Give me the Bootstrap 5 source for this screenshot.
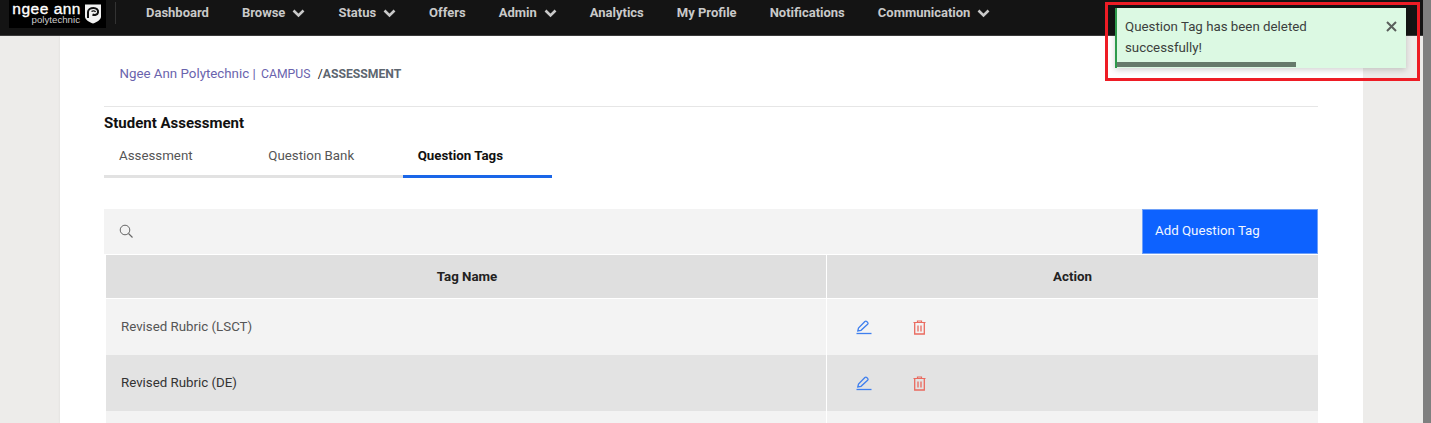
<!DOCTYPE html>
<html lang="en">
<head>
<meta charset="utf-8">
<title>Student Assessment</title>
<link href="https://cdn.jsdelivr.net/npm/bootstrap@5.3.0/dist/css/bootstrap.min.css" rel="stylesheet">
<style>
html,body{height:423px;overflow:hidden}
body{background:#edecea;font-family:Roboto,"Liberation Sans",sans-serif;font-size:13.3px;color:#444;position:relative}
.topbar{height:36px;background:#141414;border-bottom:1px solid #3a3a3a;padding-right:8px}
.brandbox{width:97px;height:28px;background:#000;margin-left:9px;color:#fff;line-height:1;flex:none}
.brandtext{width:72px;text-align:right}
.brandbig{font-size:15.5px;letter-spacing:.5px;-webkit-text-stroke:.35px #fff;line-height:18px;margin-bottom:-3px;font-family:"Liberation Sans",sans-serif;white-space:nowrap}
.brandsmall{font-size:9.700px;color:#ccc;line-height:9px;margin-right:1px;font-family:"Liberation Sans",sans-serif}
.navsep{width:1px;height:22px;background:#333;margin:2px 30px 0 9px}
.navlink{color:#c9c9c9;font-weight:700;font-size:13px;line-height:16px;text-decoration:none;margin-right:33px;white-space:nowrap;display:flex;align-items:center;gap:7px;padding-top:5px}
.shell{width:1363px;height:387px;overflow:hidden}
.panel{margin-left:60px;width:1303px;height:387px;background:#fff;box-shadow:1px 0 3px rgba(0,0,0,.15);padding:0 45px 0 44px}
.crumbs{height:71px;padding:30px 0 0 15.500px;border-bottom:1px solid #e6e6e6;font-size:13.3px;line-height:15px;white-space:nowrap}
.crumbs a{color:#6a63ad;text-decoration:none}
.crumbcampus{font-size:12.200px;margin-left:2px}
.crumbcur{font-size:12.200px;font-weight:700;color:#5d6670;margin-left:4px}
.crumbcur b{color:#222;font-weight:400}
.pagetitle{font-size:15px;font-weight:700;color:#111;margin:8px 0 0;line-height:17px}
.tabrow{width:448px;height:44px;margin-top:2px}
.tabitem{width:149.33px;height:44px;border-bottom:3px solid #e2e2e2;padding:13px 0 0 15px;color:#555;text-decoration:none;line-height:17px;font-size:13.3px}
.tabitem.onn{color:#111;font-weight:700;border-bottom-color:#1a66e8}
.searchrow{height:45px;margin-top:31px;background:#f3f3f3}
.searchico{margin-left:15px}
.addbtn{width:176px;height:45px;background:#0d62ff;border:1px solid #6ea0f8;border-radius:0;color:#f2f6ff;font-size:13.3px;text-align:left;padding:0 0 2px 12px;font-family:inherit}
.addbtn:hover{background:#0d62ff;color:#fff}
.tagtable{margin:1px 0 0 2px;width:1212px;border-collapse:separate;border-spacing:0;table-layout:fixed}
.tagtable th{background:#dfdfdf;height:44px;text-align:center;font-weight:700;color:#222;font-size:13.3px;vertical-align:middle;padding:0;border-bottom:1px solid #fff}
.tagtable th:first-child{padding-left:2px}
.tagtable td{height:56px;padding:0 0 0 15px;vertical-align:middle;font-size:13.3px;background:#f3f3f3;color:#555}
.tagtable tr.alt td{background:#e3e3e3;color:#333}
.tagtable .splitcol{border-left:1px solid #fff}
.iconcell{display:flex;align-items:center;gap:41px;padding-left:14px}
.noticebox{position:absolute;left:1115px;top:8px;width:291px;height:60px;background:#dcf9e3;border-left:2px solid #2e9a4c;box-shadow:0 2px 6px rgba(0,0,0,.18);color:#3b3f3d;font-size:13.3px;line-height:20.5px;padding:9px 0 0 8px}
.noticeclose{position:absolute;right:9px;top:13px;background:none;border:0;padding:0;line-height:0}
.noticebar{position:absolute;left:0;bottom:1px;width:179px;height:5px;background:#667a6b}
.redframe{position:absolute;left:1105px;top:2px;width:315px;height:79px;border:3px solid #ee1c25;pointer-events:none}
.sbar{position:absolute;right:0;top:0;width:8px;height:423px;background:#7f7f7f}
</style>
</head>
<body>
<nav class="topbar d-flex align-items-start">
  <div class="brandbox d-flex">
    <div class="brandtext"><div class="brandbig">ngee ann</div><div class="brandsmall">polytechnic</div></div>
    <svg width="16" height="20" viewBox="0 0 16 20" class="ms-1 mt-1"><path d="M0 .5h16v12c0 3.500-4 5.500-8 7C4 18 0 16 0 12.500z" fill="#f2f2f2"/><path d="M3 14V8C3 5.500 5.500 4 8.500 4S13.500 5.800 13 8.500C12.500 11 9.500 11.500 7.500 10.500" fill="none" stroke="#111" stroke-width="2"/><path d="M6.500 7.500C8 6.500 10 6.800 10.500 8" fill="none" stroke="#111" stroke-width="1.400"/></svg>
  </div>
  <div class="navsep"></div>
  <a class="navlink" href="#">Dashboard</a>
  <a class="navlink" href="#">Browse <svg width="13" height="9" viewBox="0 0 13 9"><path d="M1.500 1.500l5 5 5-5" fill="none" stroke="#c9c9c9" stroke-width="2.600"/></svg></a>
  <a class="navlink" href="#">Status <svg width="13" height="9" viewBox="0 0 13 9"><path d="M1.500 1.500l5 5 5-5" fill="none" stroke="#c9c9c9" stroke-width="2.600"/></svg></a>
  <a class="navlink" href="#">Offers</a>
  <a class="navlink" href="#">Admin <svg width="13" height="9" viewBox="0 0 13 9"><path d="M1.500 1.500l5 5 5-5" fill="none" stroke="#c9c9c9" stroke-width="2.600"/></svg></a>
  <a class="navlink" href="#">Analytics</a>
  <a class="navlink" href="#">My Profile</a>
  <a class="navlink" href="#">Notifications</a>
  <a class="navlink" href="#">Communication <svg width="13" height="9" viewBox="0 0 13 9"><path d="M1.500 1.500l5 5 5-5" fill="none" stroke="#c9c9c9" stroke-width="2.600"/></svg></a>
</nav>
<div class="shell">
  <main class="panel">
    <div class="crumbs"><a href="#">Ngee Ann Polytechnic |</a> <a href="#" class="crumbcampus">CAMPUS</a> <span class="crumbcur"><b>/</b>ASSESSMENT</span></div>
    <h1 class="pagetitle">Student Assessment</h1>
    <div class="tabrow d-flex">
      <a class="tabitem" href="#">Assessment</a>
      <a class="tabitem" href="#">Question Bank</a>
      <a class="tabitem onn" href="#">Question Tags</a>
    </div>
    <div class="searchrow d-flex align-items-center justify-content-between">
      <svg class="searchico" width="15" height="15" viewBox="0 0 15 15"><circle cx="6" cy="6" r="4.800" fill="none" stroke="#666" stroke-width="1"/><path d="M9.500 9.500l4 4" stroke="#666" stroke-width="1.100"/></svg>
      <button class="btn addbtn" type="button">Add Question Tag</button>
    </div>
    <table class="tagtable">
      <colgroup><col style="width:720px"><col></colgroup>
      <thead><tr><th>Tag Name</th><th class="splitcol">Action</th></tr></thead>
      <tbody>
        <tr><td>Revised Rubric (LSCT)</td><td class="splitcol"><div class="iconcell">
          <svg width="16" height="15" viewBox="0 0 16 15"><path d="M1.800 11l.7-3 6.400-6.500a1.300 1.300 0 0 1 1.800 0l.9.900a1.300 1.300 0 0 1 0 1.800L5 10.300z" fill="none" stroke="#3f7fee" stroke-width="1.300"/><path d="M0.500 13.500h15" stroke="#3f7fee" stroke-width="1.300"/></svg>
          <svg width="13" height="15" viewBox="0 0 13 15"><path d="M.5 2.500h12M4.500 2.500v-1.500h4v1.500" fill="none" stroke="#ea6a5f" stroke-width="1.200"/><path d="M1.700 3v11h9.600V3" fill="none" stroke="#ea6a5f" stroke-width="1.300"/><path d="M5 5.500v6M8 5.500v6" stroke="#ea6a5f" stroke-width="1.300"/></svg>
        </div></td></tr>
        <tr class="alt"><td>Revised Rubric (DE)</td><td class="splitcol"><div class="iconcell">
          <svg width="16" height="15" viewBox="0 0 16 15"><path d="M1.800 11l.7-3 6.400-6.500a1.300 1.300 0 0 1 1.800 0l.9.900a1.300 1.300 0 0 1 0 1.800L5 10.300z" fill="none" stroke="#3f7fee" stroke-width="1.300"/><path d="M0.500 13.500h15" stroke="#3f7fee" stroke-width="1.300"/></svg>
          <svg width="13" height="15" viewBox="0 0 13 15"><path d="M.5 2.500h12M4.500 2.500v-1.500h4v1.500" fill="none" stroke="#ea6a5f" stroke-width="1.200"/><path d="M1.700 3v11h9.600V3" fill="none" stroke="#ea6a5f" stroke-width="1.300"/><path d="M5 5.500v6M8 5.500v6" stroke="#ea6a5f" stroke-width="1.300"/></svg>
        </div></td></tr>
        <tr><td>&nbsp;</td><td class="splitcol">&nbsp;</td></tr>
      </tbody>
    </table>
  </main>
</div>
<div class="noticebox" role="alert">Question Tag has been deleted<br>successfully!
  <button class="noticeclose" type="button" aria-label="Close"><svg width="11" height="11" viewBox="0 0 11 11"><path d="M1 1l9 9M10 1l-9 9" stroke="#5a5f5c" stroke-width="2"/></svg></button>
  <div class="noticebar"></div>
</div>
<div class="redframe"></div>
<div class="sbar"></div>
<script src="https://cdn.jsdelivr.net/npm/bootstrap@5.3.0/dist/js/bootstrap.bundle.min.js"></script>
</body>
</html>
